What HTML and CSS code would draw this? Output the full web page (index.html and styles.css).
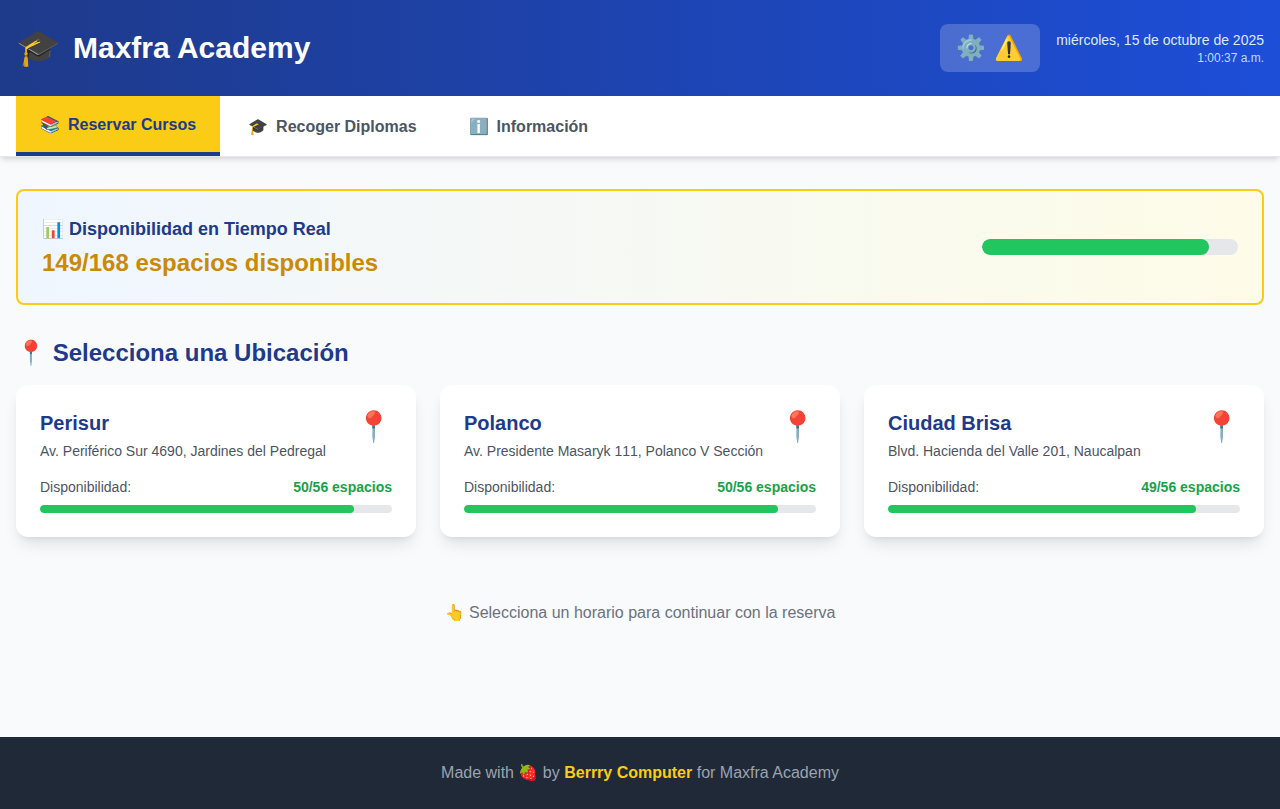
FILE: index.html
```html
<!DOCTYPE html>
<html lang="es">
<head>
  <meta charset="UTF-8" />
  <title>Maxfra Academy</title>
  <meta name="viewport" content="width=device-width, initial-scale=1.0" />
  <link rel="stylesheet" href="styles.css">
</head>
<body>
  <header class="top-bar">
    <div class="brand">
      <span class="brand-icon">🎓</span>
      <h1>Maxfra Academy</h1>
    </div>
    <div class="top-right">
      <div class="status-box">
        <span>⚙️</span>
        <span>⚠️</span>
      </div>
      <div class="clock">
        <div class="clock-date">miércoles, 15 de octubre de 2025</div>
        <div class="clock-time">1:00:37 a.m.</div>
      </div>
    </div>
  </header>

  <nav class="tabs">
    <button class="tab tab-active"><span>📚</span><span>Reservar Cursos</span></button>
    <button class="tab"><span>🎓</span><span>Recoger Diplomas</span></button>
    <button class="tab"><span>ℹ️</span><span>Información</span></button>
  </nav>

  <main>
    <section class="availability">
      <div>
        <h3>📊 Disponibilidad en Tiempo Real</h3>
        <p class="availability-count">149/168 espacios disponibles</p>
      </div>
      <div class="bar bar-total">
        <div class="bar-fill" style="width: 88.7%"></div>
      </div>
    </section>

    <h2 class="section-title">📍 Selecciona una Ubicación</h2>

    <div class="locations">
      <article class="location-card">
        <div class="location-head">
          <div>
            <h3>Perisur</h3>
            <p class="address">Av. Periférico Sur 4690, Jardines del Pedregal</p>
          </div>
          <span class="pin">📍</span>
        </div>
        <div class="spaces">
          <span>Disponibilidad:</span>
          <span class="spaces-count">50/56 espacios</span>
        </div>
        <div class="bar"><div class="bar-fill" style="width: 89.3%"></div></div>
      </article>

      <article class="location-card">
        <div class="location-head">
          <div>
            <h3>Polanco</h3>
            <p class="address">Av. Presidente Masaryk <span class="no-kern">111</span>, Polanco V Sección</p>
          </div>
          <span class="pin">📍</span>
        </div>
        <div class="spaces">
          <span>Disponibilidad:</span>
          <span class="spaces-count">50/56 espacios</span>
        </div>
        <div class="bar"><div class="bar-fill" style="width: 89.3%"></div></div>
      </article>

      <article class="location-card">
        <div class="location-head">
          <div>
            <h3>Ciudad Brisa</h3>
            <p class="address">Blvd. Hacienda del Valle 201, Naucalpan</p>
          </div>
          <span class="pin">📍</span>
        </div>
        <div class="spaces">
          <span>Disponibilidad:</span>
          <span class="spaces-count">49/56 espacios</span>
        </div>
        <div class="bar"><div class="bar-fill" style="width: 87.5%"></div></div>
      </article>
    </div>

    <p class="hint">👆 Selecciona un horario para continuar con la reserva</p>
  </main>

  <footer>
    Made with 🍓 by <a href="#">Berrry Computer</a> for Maxfra Academy
  </footer>
</body>
</html>
```

FILE: styles.css
```css
:root {
  --navy: #1e3a8a;
  --yellow: #facc15;
  --green: #22c55e;
}

* {
  box-sizing: border-box;
}

body {
  margin: 0;
  min-height: 100vh;
  display: flex;
  flex-direction: column;
  font-family: "Liberation Sans", Arial, sans-serif;
  font-size: 16px;
  line-height: 24px;
  background: #f9fafb;
  color: #1f2937;
}

h1, h2, h3, p {
  margin: 0;
}

.top-bar {
  display: flex;
  align-items: center;
  justify-content: space-between;
  height: 96px;
  padding: 0 16px;
  background: linear-gradient(to right, #1e3a8a, #1d4ed8);
  color: white;
}

.brand {
  display: flex;
  align-items: center;
  gap: 12px;
}

.brand-icon {
  font-size: 36px;
  line-height: 40px;
}

.brand h1 {
  font-size: 30px;
  line-height: 36px;
  font-weight: bold;
}

.top-right {
  display: flex;
  align-items: center;
  gap: 16px;
}

.status-box {
  display: flex;
  align-items: center;
  gap: 8px;
  padding: 8px 16px;
  border-radius: 8px;
  background: rgba(255, 255, 255, 0.2);
  font-size: 24px;
  line-height: 32px;
}

.clock {
  text-align: right;
}

.clock-date {
  font-size: 14px;
  line-height: 20px;
  color: #dbeafe;
}

.clock-time {
  font-size: 12px;
  line-height: 16px;
  color: #bfdbfe;
}

.tabs {
  display: flex;
  gap: 4px;
  padding: 0 16px;
  background: white;
  border-bottom: 1px solid #e5e7eb;
  box-shadow: 0 4px 6px -1px rgba(0, 0, 0, 0.1), 0 2px 4px -2px rgba(0, 0, 0, 0.1);
}

.tab {
  display: flex;
  align-items: center;
  gap: 8px;
  padding: 17px 24px 15px;
  border: 0;
  background: none;
  font-family: inherit;
  font-size: 16px;
  line-height: 24px;
  font-weight: bold;
  color: #4b5563;
}

.tab-active {
  background: var(--yellow);
  color: var(--navy);
  border-bottom: 4px solid var(--navy);
}

main {
  flex: 1;
  padding: 32px 16px 0;
}

.availability {
  display: flex;
  align-items: center;
  justify-content: space-between;
  padding: 24px;
  border: 2px solid var(--yellow);
  border-radius: 8px;
  background: linear-gradient(to right, #eff6ff, #fefce8);
}

.availability h3 {
  font-size: 18px;
  line-height: 28px;
  color: var(--navy);
}

.availability-count {
  margin-top: 4px;
  font-size: 24px;
  line-height: 32px;
  font-weight: bold;
  color: #ca8a04;
}

.section-title {
  margin: 32px 0 16px;
  font-size: 24px;
  line-height: 32px;
  color: var(--navy);
}

.locations {
  display: grid;
  grid-template-columns: repeat(3, 1fr);
  gap: 24px;
}

.location-card {
  padding: 24px;
  border-radius: 12px;
  background: white;
  box-shadow: 0 10px 15px -3px rgba(0, 0, 0, 0.1), 0 4px 6px -4px rgba(0, 0, 0, 0.1);
}

.location-head {
  display: flex;
  align-items: flex-start;
  justify-content: space-between;
}

.location-head h3 {
  font-size: 20px;
  line-height: 28px;
  color: var(--navy);
}

.address {
  margin-top: 4px;
  font-size: 14px;
  line-height: 20px;
  color: #4b5563;
}

.no-kern {
  font-kerning: none;
}

.pin {
  font-size: 30px;
  line-height: 36px;
}

.spaces {
  display: flex;
  justify-content: space-between;
  margin-top: 16px;
  font-size: 14px;
  line-height: 20px;
  color: #4b5563;
}

.spaces-count {
  font-weight: bold;
  color: #16a34a;
}

.bar {
  height: 8px;
  margin-top: 8px;
  border-radius: 9999px;
  background: #e5e7eb;
  overflow: hidden;
}

.bar-total {
  width: 256px;
  height: 16px;
  margin-top: 0;
}

.bar-fill {
  height: 100%;
  border-radius: 9999px;
  background: var(--green);
}

.hint {
  margin-top: 64px;
  text-align: center;
  color: #6b7280;
}

footer {
  padding: 24px;
  background: #1f2937;
  color: #9ca3af;
  text-align: center;
}

footer a {
  color: var(--yellow);
  font-weight: bold;
  text-decoration: none;
}
```
